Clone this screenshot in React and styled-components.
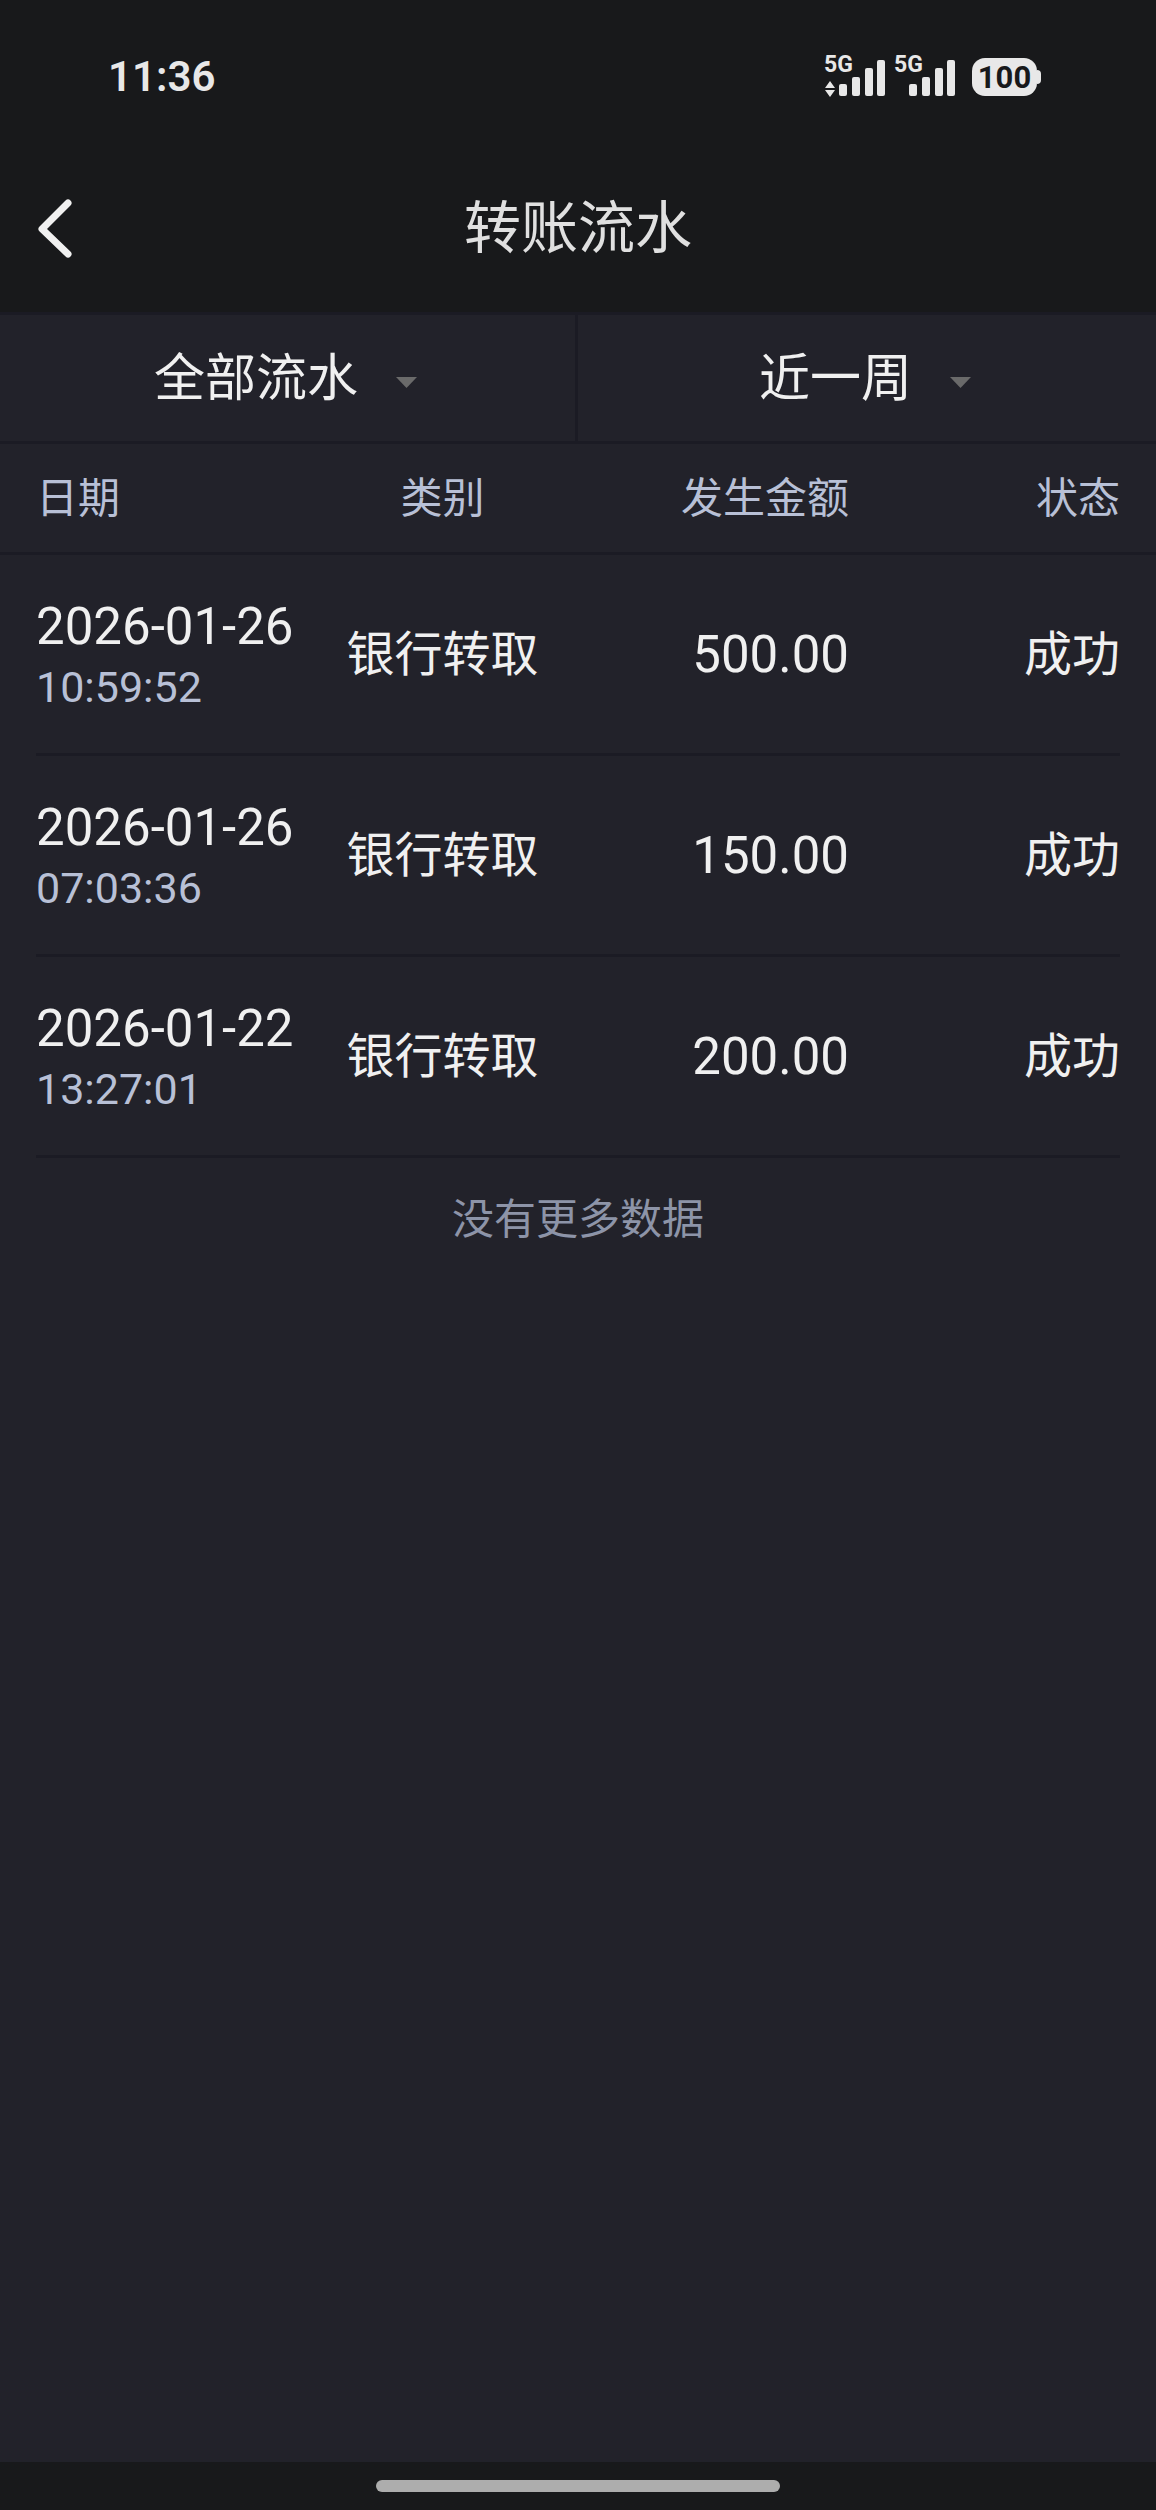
import styled, { createGlobalStyle, css } from 'styled-components';

const colors = {
	bar: '#18191b',
	page: '#22222a',
	line: '#1b1b24',
	text: '#f0f0f0',
	title: '#e0e0e0',
	label: '#b8c0d6',
	muted: '#8d94a8',
	status: '#e8e8e8',
};

const GlobalStyle = createGlobalStyle`
	* {
		box-sizing: border-box;
	}
	body {
		margin: 0;
		background: ${colors.page};
		font-family: Roboto, 'Noto Sans CJK SC', sans-serif;
	}
`;

const Screen = styled.div`
	min-height: 100vh;
	display: flex;
	flex-direction: column;
	background: ${colors.page};
	color: ${colors.text};
`;

// status bar
const StatusBar = styled.div`
	height: 144px;
	padding: 10px 115px 0 108px;
	display: flex;
	align-items: center;
	justify-content: space-between;
	background: ${colors.bar};
	color: ${colors.status};
`;

const Clock = styled.time`
	font-size: 42px;
	font-weight: 600;
	line-height: 48px;
`;

const StatusIcons = styled.div`
	display: flex;
	align-items: center;
`;

const Signal = styled.div`
	position: relative;
	display: flex;
	width: 62px;
	height: 42px;
	margin-right: 8px;
`;

const NetworkType = styled.span`
	position: absolute;
	top: 0;
	left: 0;
	font-size: 23px;
	font-weight: 700;
	line-height: 18px;
`;

const BatteryBox = styled.div`
	display: flex;
	align-items: center;
	margin-left: 8px;
`;

const BatteryBody = styled.div`
	width: 65px;
	height: 38px;
	border-radius: 13px;
	background: ${colors.status};
	color: ${colors.bar};
	font-size: 31px;
	font-weight: 700;
	line-height: 40px;
	text-align: center;
`;

const BatteryTip = styled.div`
	width: 4px;
	height: 14px;
	border-radius: 0 4px 4px 0;
	background: ${colors.status};
`;

// title bar
const NavBar = styled.header`
	height: 171px;
	display: grid;
	grid-template-columns: 110px 1fr 110px;
	align-items: center;
	background: ${colors.bar};
	border-bottom: 3px solid ${colors.line};
`;

const BackButton = styled.button`
	display: flex;
	padding: 0 0 0 36px;
	border: 0;
	background: none;
	color: ${colors.text};
	cursor: pointer;
`;

const Title = styled.h1`
	margin: 0;
	padding-top: 2px;
	color: ${colors.title};
	font-size: 57px;
	font-weight: 400;
	line-height: 64px;
	text-align: center;
`;

// filters
const Filters = styled.div`
	display: grid;
	grid-template-columns: 1fr 1fr;
	border-bottom: 3px solid ${colors.line};
`;

const FilterCell = styled.label`
	height: 126px;
	padding-right: 4px;
	display: flex;
	align-items: center;
	justify-content: center;

	&:not(:last-child) {
		border-right: 3px solid ${colors.line};
	}
`;

const FilterSelect = styled.select`
	appearance: none;
	field-sizing: content;
	height: 72px;
	padding: 2px 59px 0 0;
	border: 0;
	background: none;
	color: ${colors.text};
	font-family: inherit;
	font-size: 51px;
	line-height: 70px;
	cursor: pointer;
`;

// the arrow sits in the right padding of the select
const Arrow = styled.svg`
	margin: 8px 0 0 -21px;
	pointer-events: none;
`;

// records
const Table = styled.table`
	display: block;
`;

const rowGrid = css`
	display: grid;
	grid-template-columns: repeat(4, 1fr);
	align-items: center;
	border-bottom: 3px solid ${colors.line};
`;

const TableHead = styled.thead`
	display: block;
`;

const TableBody = styled.tbody`
	display: block;
	padding: 0 36px;
`;

const HeadRow = styled.tr`
	${rowGrid}
	height: 111px;
	padding: 0 36px;
`;

const Row = styled.tr`
	${rowGrid}
	height: 201px;
`;

const HeadCell = styled.th`
	padding: 2px 0 0;
	color: ${colors.label};
	font-size: 42px;
	font-weight: 400;
	line-height: 60px;
	text-align: ${({ $align }) => $align};
`;

const Cell = styled.td`
	padding: 2px 0 0;
	font-size: ${({ $number }) => ($number ? 51 : 48)}px;
	line-height: 60px;
	text-align: ${({ $align }) => $align};
	white-space: nowrap;
`;

const DateCell = styled(Cell)`
	padding-top: 6px;
`;

const Day = styled.div`
	line-height: 60px;
`;

const Time = styled.div`
	color: ${colors.label};
	font-size: 43px;
	line-height: 60px;
`;

const NoMore = styled.p`
	flex: 1;
	margin: 0;
	padding-top: 32px;
	color: ${colors.muted};
	font-size: 42px;
	line-height: 60px;
	text-align: center;
`;

const HomeBar = styled.div`
	height: 48px;
	display: flex;
	align-items: center;
	justify-content: center;
	background: ${colors.bar};
`;

const HomePill = styled.div`
	width: 35%;
	height: 12px;
	border-radius: 6px;
	background: #adadad;
`;

const columns = [
	{ title: '日期', align: 'left' },
	{ title: '类别', align: 'center' },
	{ title: '发生金额', align: 'right' },
	{ title: '状态', align: 'right' },
];

const records = [
	{ day: '2026-01-26', time: '10:59:52', type: '银行转取', amount: '500.00', status: '成功' },
	{ day: '2026-01-26', time: '07:03:36', type: '银行转取', amount: '150.00', status: '成功' },
	{ day: '2026-01-22', time: '13:27:01', type: '银行转取', amount: '200.00', status: '成功' },
];

const SignalIcon = ({ active }) => (
	<Signal>
		<NetworkType>5G</NetworkType>
		<svg width="62" height="42" viewBox="0 0 62 42" fill="currentColor">
			{active && <path d="M6 25l5 7H1zM6 41l-5-7h10z" />}
			<rect x="15" y="28" width="8" height="12" rx="2" />
			<rect x="28" y="21" width="8" height="19" rx="2" />
			<rect x="41" y="12" width="8" height="28" rx="2" />
			<rect x="53" y="4" width="8" height="36" rx="2" />
		</svg>
	</Signal>
);

const Filter = ({ name, options }) => (
	<FilterCell>
		<FilterSelect aria-label={name}>
			{options.map((option) => (
				<option key={option}>{option}</option>
			))}
		</FilterSelect>
		<Arrow width="21" height="11" viewBox="0 0 42 22">
			<path d="M0 0h42L21 22z" fill="#6a6a6a" />
		</Arrow>
	</FilterCell>
);

const App = () => (
	<Screen>
		<GlobalStyle />
		<StatusBar>
			<Clock>11:36</Clock>
			<StatusIcons>
				<SignalIcon active />
				<SignalIcon />
				<BatteryBox>
					<BatteryBody>100</BatteryBody>
					<BatteryTip />
				</BatteryBox>
			</StatusIcons>
		</StatusBar>
		<NavBar>
			<BackButton aria-label="返回">
				<svg width="38" height="60" viewBox="0 0 38 60" fill="none" stroke="currentColor" strokeWidth="7" strokeLinecap="round" strokeLinejoin="round">
					<path d="M32 5L6 31l26 25" />
				</svg>
			</BackButton>
			<Title>转账流水</Title>
		</NavBar>
		<Filters>
			<Filter name="流水类型" options={['全部流水']} />
			<Filter name="时间范围" options={['近一周']} />
		</Filters>
		<Table>
			<TableHead>
				<HeadRow>
					{columns.map(({ title, align }) => (
						<HeadCell key={title} scope="col" $align={align}>{title}</HeadCell>
					))}
				</HeadRow>
			</TableHead>
			<TableBody>
				{records.map(({ day, time, type, amount, status }) => (
					<Row key={day + time}>
						<DateCell $number $align="left">
							<Day>{day}</Day>
							<Time>{time}</Time>
						</DateCell>
						<Cell $align="center">{type}</Cell>
						<Cell $number $align="right">{amount}</Cell>
						<Cell $align="right">{status}</Cell>
					</Row>
				))}
			</TableBody>
		</Table>
		<NoMore>没有更多数据</NoMore>
		<HomeBar>
			<HomePill />
		</HomeBar>
	</Screen>
);

export default App;
